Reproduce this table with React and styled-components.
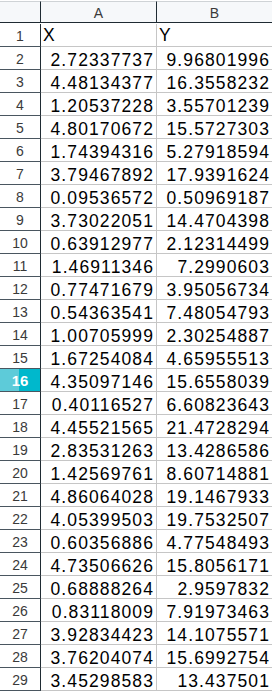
import React from "react";
import styled, { createGlobalStyle } from "styled-components";

const Global = createGlobalStyle`
  html, body { margin: 0; padding: 0; background: #ffffff; }
  body { font-family: "Liberation Sans", Arial, sans-serif; }
`;

const data = [
  ["X", "Y"],
  ["2.72337737", "9.96801996"],
  ["4.48134377", "16.3558232"],
  ["1.20537228", "3.55701239"],
  ["4.80170672", "15.5727303"],
  ["1.74394316", "5.27918594"],
  ["3.79467892", "17.9391624"],
  ["0.09536572", "0.50969187"],
  ["3.73022051", "14.4704398"],
  ["0.63912977", "2.12314499"],
  ["1.46911346", "7.2990603"],
  ["0.77471679", "3.95056734"],
  ["0.54363541", "7.48054793"],
  ["1.00705999", "2.30254887"],
  ["1.67254084", "4.65955513"],
  ["4.35097146", "15.6558039"],
  ["0.40116527", "6.60823643"],
  ["4.45521565", "21.4728294"],
  ["2.83531263", "13.4286586"],
  ["1.42569761", "8.60714881"],
  ["4.86064028", "19.1467933"],
  ["4.05399503", "19.7532507"],
  ["0.60356886", "4.77548493"],
  ["4.73506626", "15.8056171"],
  ["0.68888264", "2.9597832"],
  ["0.83118009", "7.91973463"],
  ["3.92834423", "14.1075571"],
  ["3.76204074", "15.6992754"],
  ["3.45298583", "13.437501"],
];

const Sheet = styled.div`
  display: grid;
  grid-template-columns: 41px 116px 116px;
  grid-auto-rows: 23px;
  width: 273px;
  padding-top: 1px;
  overflow: hidden;
`;

const HeadRow = styled.div`
  display: contents;
`;

const HeadCell = styled.div`
  height: 19px;
  background: #f6f8fa;
  border-top: 1px solid #cfd3d6;
  border-right: 1px solid #1f2b33;
  border-bottom: 1px solid #1f2b33;
  display: flex;
  align-items: center;
  justify-content: center;
  font-size: 14px;
  color: #3a3a3a;
  padding-top: 1px;
  box-sizing: content-box;
`;

const RowNum = styled.div`
  height: 22px;
  border-right: 1px solid #1f2b33;
  border-bottom: 1px solid #4a5660;
  background: ${(p) =>
    p.$active
      ? "linear-gradient(to right, #5dcbd9 0, #5dcbd9 19px, #00b8cc 19px, #00b8cc 100%)"
      : "#ffffff"};
  color: ${(p) => (p.$active ? "#ffffff" : "#3a3a3a")};
  font-weight: ${(p) => (p.$active ? "bold" : "normal")};
  font-size: ${(p) => (p.$active ? "15px" : "14px")};
  display: flex;
  align-items: flex-end;
  justify-content: center;
  line-height: 20px;
`;

const Cell = styled.div`
  height: 22px;
  box-sizing: border-box;
  border-right: 1px solid #c6c6c6;
  border-bottom: 1px solid #c6c6c6;
  height: 23px;
  display: flex;
  align-items: flex-end;
  justify-content: ${(p) => (p.$text ? "flex-start" : "flex-end")};
  padding: 0 ${(p) => (p.$text ? "0" : "2px")} ${(p) => (p.$text ? "2px" : "0")}
    ${(p) => (p.$text ? "2px" : "0")};
  font-size: 17.5px;
  letter-spacing: 1.1px;
  line-height: 18px;
  color: #000000;
  white-space: nowrap;
  overflow: hidden;
`;

export default function App() {
  return (
    <>
      <Global />
      <Sheet>
        <HeadRow>
          <HeadCell />
          <HeadCell>A</HeadCell>
          <HeadCell>B</HeadCell>
        </HeadRow>
        {data.map((row, i) => (
          <React.Fragment key={i}>
            <RowNum $active={i + 1 === 16}>{i + 1}</RowNum>
            <Cell $text={i === 0}>{row[0]}</Cell>
            <Cell $text={i === 0}>{row[1]}</Cell>
          </React.Fragment>
        ))}
      </Sheet>
    </>
  );
}
